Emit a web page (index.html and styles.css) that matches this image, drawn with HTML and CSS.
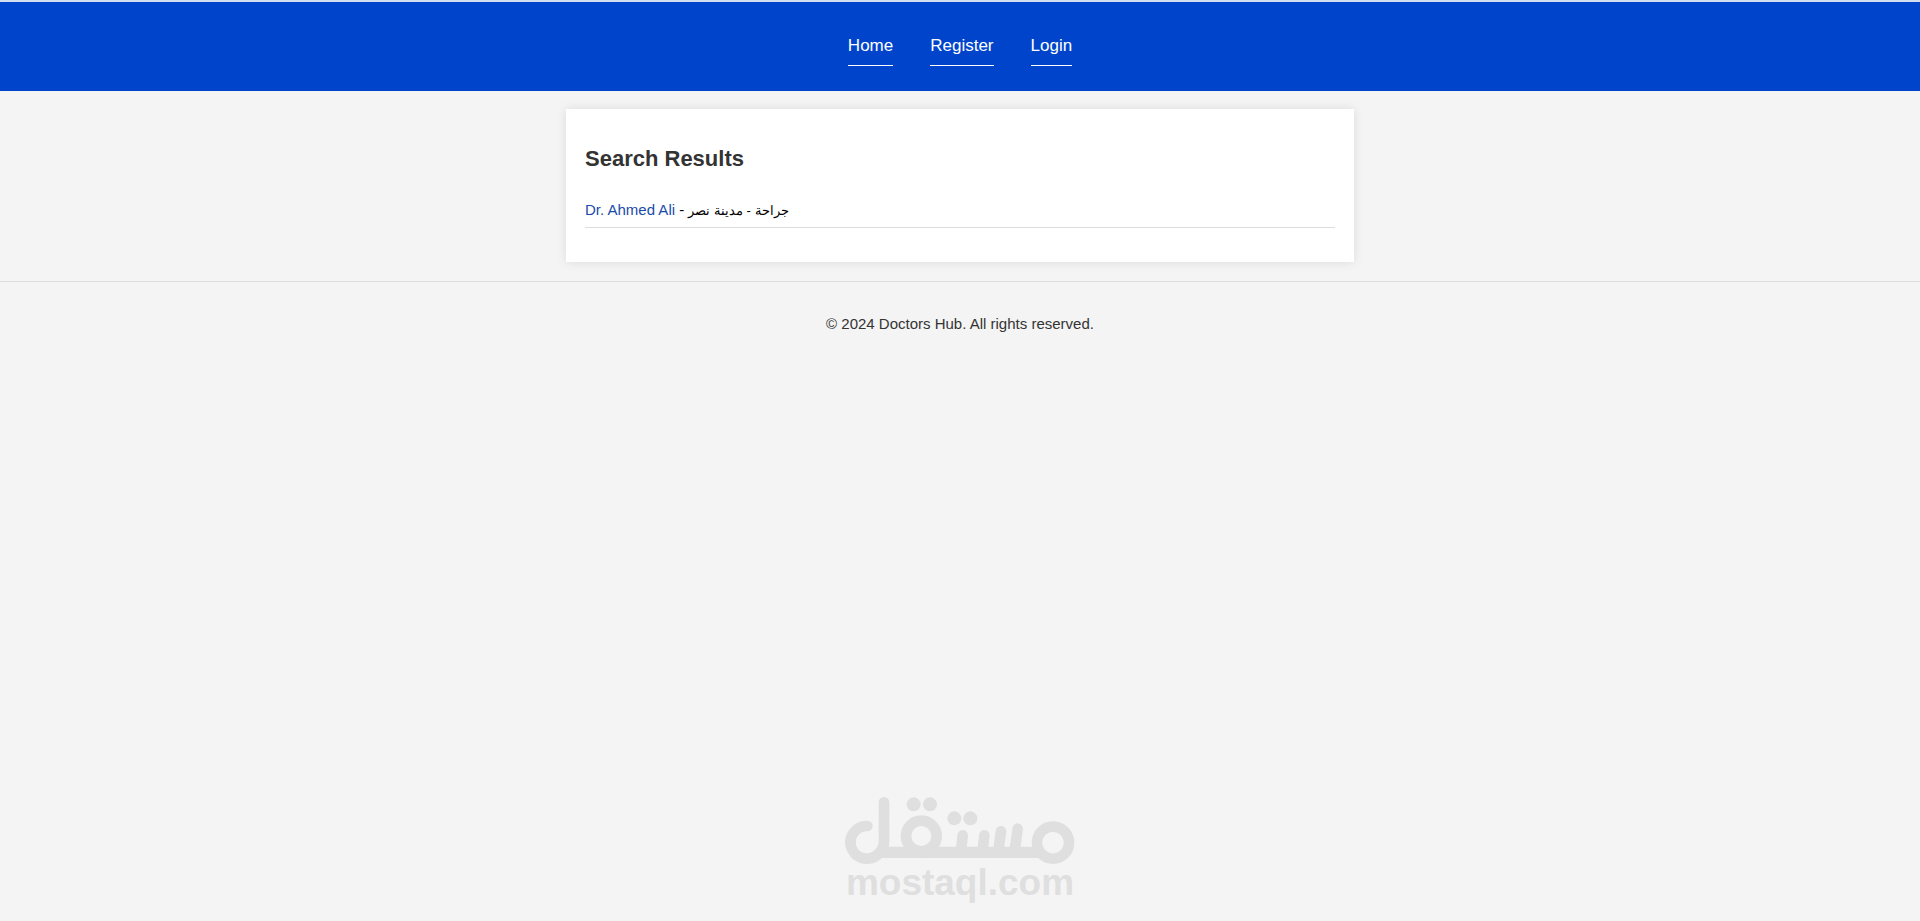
FILE: index.html
```html
<!DOCTYPE html>
<html lang="en">
<head>
    <meta charset="UTF-8">
    <meta name="viewport" content="width=device-width, initial-scale=1.0">
    <title>Search Results</title>
    <link rel="stylesheet" href="styles.css">
</head>
<body>
    <header>
        <nav>
            <ul>
                <li><a href="index.html">Home</a></li>
                <li><a href="register.html">Register</a></li>
                <li><a href="login.html">Login</a></li>
            </ul>
        </nav>
    </header>

    <main class="container">
        <h2>Search Results</h2>
        <ul class="results">
            <li><a href="doctor.html">Dr. Ahmed Ali</a> - <span lang="ar" dir="rtl">جراحة - مدينة نصر</span></li>
        </ul>
    </main>

    <footer>
        <p>&copy; 2024 Doctors Hub. All rights reserved.</p>
    </footer>

    <!-- Watermark -->
    <div class="watermark">
        <svg viewBox="45 51 690 204" width="230" height="68" role="img" aria-label="مستقل">
            <g fill="none" stroke="currentColor" stroke-width="32" stroke-linecap="round">
                <path d="M112 138 A49 49 0 1 0 150 216 Q162 204 162 186 V67"/>
                <path d="M146 217 H640" stroke-width="34" stroke-linecap="butt"/>
                <circle cx="274" cy="168" r="46"/>
                <path d="M398 166 L393 212"/>
                <path d="M463 166 L458 212"/>
                <path d="M513 154 L505 212"/>
                <path d="M563 146 L554 212"/>
                <circle cx="669" cy="188" r="48"/>
            </g>
            <g fill="currentColor">
                <circle cx="251" cy="73" r="21"/>
                <circle cx="300" cy="73" r="21"/>
                <circle cx="373" cy="115" r="21"/>
                <circle cx="421" cy="115" r="21"/>
            </g>
        </svg>
        <span>mostaql.com</span>
    </div>
</body>
</html>
```

FILE: styles.css
```css
* {
    box-sizing: border-box;
}

body {
    font-family: Arial, "Liberation Sans", sans-serif;
    font-size: 15px;
    line-height: 18px;
    background-color: #f4f4f4;
    color: #000;
    margin: 0;
    min-height: 100vh;
    display: flex;
    flex-direction: column;
}

header {
    background-color: #0044cc;
    border-top: 2px solid #d3deee;
    padding: 25px 0;
}

nav ul {
    list-style: none;
    display: flex;
    justify-content: center;
    gap: 37px;
    margin: 0;
    padding: 0;
}

nav a {
    display: block;
    color: #fff;
    font-size: 17px;
    line-height: 20px;
    text-decoration: none;
    padding: 9px 0;
    border-bottom: 1px solid #fff;
}

.container {
    width: 100%;
    max-width: 788px;
    margin: 18px auto 19px;
    padding: 19px;
    background-color: #fff;
    box-shadow: 0 0 10px rgba(0, 0, 0, 0.1);
}

h2 {
    color: #333;
    font-size: 22px;
    line-height: 26px;
    margin: 18px 0 21px;
}

.results {
    list-style: none;
    margin: 0 0 15px;
    padding: 0;
}

.results li {
    padding: 8px 0;
    border-bottom: 1px solid #ddd;
}

.results a {
    color: #1a4ba8;
    text-decoration: none;
}

.results span {
    font-size: 13px;
    line-height: 1;
}

footer {
    text-align: center;
    color: #333;
    border-top: 1px solid #ddd;
    padding: 19px;
}

footer p {
    margin: 14px 0;
}

.watermark {
    margin: auto auto 20px;
    display: flex;
    flex-direction: column;
    align-items: center;
    color: #dfdfdf;
}

.watermark span {
    font-size: 37px;
    font-weight: bold;
    line-height: 36px;
}
```
